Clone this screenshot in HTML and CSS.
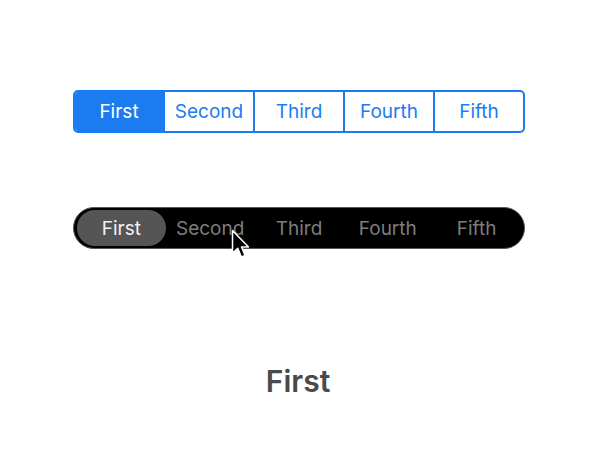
FILE: index.html
```html
<!DOCTYPE html>
<html>
<head>
<meta charset="utf-8">
<link rel="stylesheet" href="styles.css">
</head>
<body>
<div class="page">
  <div class="seg-light">
    <div class="seg selected">First</div>
    <div class="seg">Second</div>
    <div class="seg">Third</div>
    <div class="seg">Fourth</div>
    <div class="seg">Fifth</div>
  </div>
  <div class="seg-dark">
    <div class="dseg selected">First</div>
    <div class="dseg">Second</div>
    <div class="dseg">Third</div>
    <div class="dseg">Fourth</div>
    <div class="dseg">Fifth</div>
    <svg class="cursor" width="21" height="32" viewBox="0 0 21 32">
      <path d="M1.5 1.5 L1.5 24 L6.8 19.3 L10.3 28 L14 26.4 L10.5 18 L17.5 18 Z" fill="#000" stroke="#fff" stroke-width="1.5" stroke-linejoin="round"/>
    </svg>
  </div>
  <div class="label">First</div>
</div>
</body>
</html>
```
FILE: styles.css
```css
html, body {
  margin: 0;
  padding: 0;
  background: #fff;
}
.page {
  width: 596px;
  height: 450px;
  display: flex;
  flex-direction: column;
  align-items: center;
  padding-top: 90px;
  box-sizing: border-box;
  font-family: Inter, "Noto Sans", sans-serif;
}
.seg-light {
  display: flex;
  width: 452px;
  height: 43px;
  box-sizing: border-box;
  border: 2px solid #1b7cf2;
  border-radius: 5px;
  overflow: hidden;
  margin-left: 2px;
}
.seg {
  flex: 1;
  display: flex;
  align-items: center;
  justify-content: center;
  color: #1b7cf2;
  font-size: 19px;
  border-left: 2px solid #1b7cf2;
}
.seg:first-child {
  border-left: none;
}
.seg.selected {
  background: #1b7cf2;
  color: #fff;
}
.seg-dark {
  position: relative;
  display: flex;
  width: 452px;
  height: 42px;
  box-sizing: border-box;
  margin-top: 74px;
  margin-left: 2px;
  padding: 2px 3px;
  background: #000;
  border: 1px solid #555;
  border-radius: 21px;
}
.dseg {
  flex: 1;
  display: flex;
  align-items: center;
  justify-content: center;
  color: #7d7d7d;
  font-size: 19px;
  border-radius: 18px;
}
.dseg.selected {
  background: #555;
  color: #f2f2f2;
}
.cursor {
  position: absolute;
  left: 157px;
  top: 21px;
}
.label {
  margin-top: 114px;
  font-size: 30px;
  font-weight: 600;
  color: #4a4a4a;
}
```
